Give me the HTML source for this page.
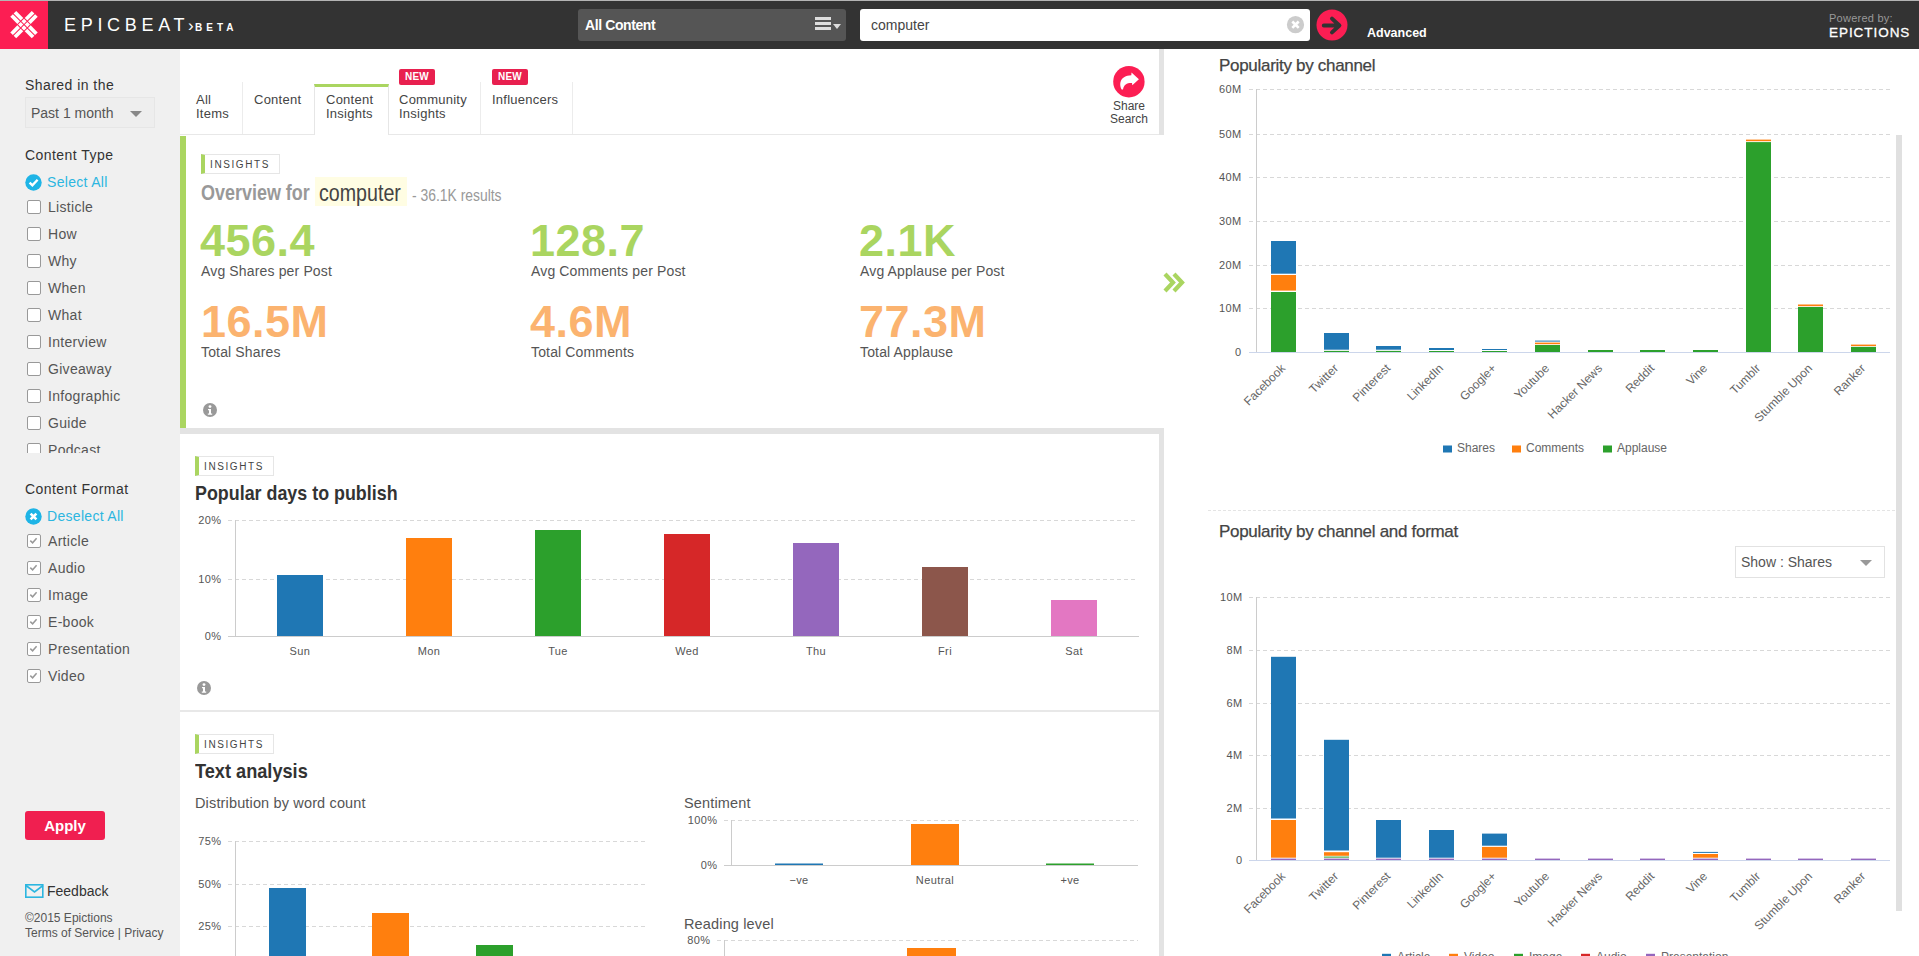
<!DOCTYPE html>
<html><head><meta charset="utf-8">
<style>
*{margin:0;padding:0;box-sizing:border-box}
html,body{width:1919px;height:956px;overflow:hidden;background:#fff;font-family:"Liberation Sans",sans-serif;color:#444}
.a{position:absolute;white-space:nowrap}
#hdr{position:absolute;left:0;top:0;width:1919px;height:49px;background:#333;border-top:1px solid #b4b4b4}
#side{position:absolute;left:0;top:49px;width:180px;height:907px;background:#f0f0f0}
.cb{position:absolute;left:27px;width:14px;height:14px;border:1.5px solid #999;border-radius:2px;background:#fff}
.lbl{position:absolute;left:48px;font-size:14px;color:#555;line-height:16px;letter-spacing:0.3px}
.badge{position:absolute;height:20px;border:1px solid #e6e6e6;border-left:4px solid #aad560;font-size:10px;letter-spacing:1.6px;color:#444;padding-left:5px;line-height:20px;width:79px}
.cond{display:inline-block;transform-origin:0 0;font-weight:bold}
.big{position:absolute;font-size:45px;font-weight:bold;line-height:45px;letter-spacing:0.5px}
.sub{position:absolute;font-size:14px;color:#555;line-height:16px;letter-spacing:0.15px}
.tab{font-size:13px;line-height:14px;color:#444;letter-spacing:0.25px}
.new{width:36px;height:16px;background:#e8204f;border-radius:2px;color:#fff;font-weight:bold;font-size:10px;line-height:16px;text-align:center;letter-spacing:0.3px}
</style></head><body>
<div id="hdr">
 <div class="a" style="left:0;top:0;width:48px;height:48px;background:#fc1e53"></div>
 <svg class="a" style="left:0;top:0" width="48" height="48" viewBox="0 0 48 48"><g fill="#fff" transform="translate(24 23.6) rotate(45)"><rect x="-4.20" y="-4.20" width="3.70" height="3.70"/><rect x="-4.20" y="0.50" width="3.70" height="3.70"/><rect x="0.50" y="-4.20" width="3.70" height="3.70"/><rect x="0.50" y="0.50" width="3.70" height="3.70"/><rect x="5.20" y="-4.20" width="10.00" height="3.70"/><rect x="5.20" y="0.50" width="10.00" height="3.70"/><rect x="-15.20" y="-4.20" width="10.00" height="3.70"/><rect x="-15.20" y="0.50" width="10.00" height="3.70"/><rect x="-4.20" y="5.20" width="3.70" height="10.00"/><rect x="0.50" y="5.20" width="3.70" height="10.00"/><rect x="-4.20" y="-15.20" width="3.70" height="10.00"/><rect x="0.50" y="-15.20" width="3.70" height="10.00"/></g></svg>
 <div class="a" style="left:64px;top:14px;font-size:18px;letter-spacing:4.7px;color:#fff;line-height:20px">EPICBEAT</div>
 <div class="a" style="left:188px;top:16px;font-size:17px;color:#fff;line-height:17px">›</div>
 <div class="a" style="left:195px;top:21px;font-size:10px;font-weight:bold;letter-spacing:4px;color:#fff;line-height:12px">BETA</div>
 <div class="a" style="left:578px;top:8px;width:268px;height:32px;background:#555;border-radius:3px"></div>
 <div class="a" style="left:585px;top:16px;font-size:14px;font-weight:bold;color:#fff;line-height:17px;letter-spacing:-0.4px">All Content</div>
 <div class="a" style="left:815px;top:16px;width:16px;height:3px;background:#ddd;box-shadow:0 5px 0 #ddd,0 10px 0 #ddd"></div>
 <div class="a" style="left:833px;top:23px;width:0;height:0;border-left:4px solid transparent;border-right:4px solid transparent;border-top:5px solid #ddd"></div>
 <div class="a" style="left:860px;top:8px;width:450px;height:32px;background:#fff;border-radius:3px"></div>
 <div class="a" style="left:871px;top:16px;font-size:14px;color:#444;line-height:17px">computer</div>
 <svg class="a" style="left:1286px;top:14px" width="20" height="20"><circle cx="9.5" cy="9.7" r="8.6" fill="#ccc"/><path d="M6.3 6.5 L12.7 12.9 M12.7 6.5 L6.3 12.9" stroke="#fff" stroke-width="2.6"/></svg>
 <svg class="a" style="left:1316px;top:8px" width="32" height="32"><circle cx="16" cy="16" r="15.5" fill="#fc1e53"/><path d="M7.8 16.5 H23 M16 9.6 L23.4 16.5 L16 23.4" stroke="#333" stroke-width="4" fill="none" stroke-linecap="round" stroke-linejoin="round"/></svg>
 <div class="a" style="left:1367px;top:25px;font-size:12.5px;font-weight:bold;color:#fff;line-height:15px">Advanced</div>
 <div class="a" style="left:1829px;top:11px;font-size:11px;color:#999;line-height:13px;letter-spacing:0.25px">Powered by:</div>
 <div class="a" style="left:1829px;top:24px;font-size:13.5px;letter-spacing:0.95px;color:#fff;line-height:15px;-webkit-text-stroke:0.3px #fff">EPICTIONS</div>
</div>
<div id="side">
 <div class="a" style="left:25px;top:28px;font-size:14px;color:#333;line-height:16px;letter-spacing:0.45px">Shared in the</div>
 <div class="a" style="left:25px;top:48px;width:130px;height:31px;border:1px solid #e6e6e6;background:#eee"></div>
 <div class="a" style="left:31px;top:56px;font-size:14px;color:#555;line-height:16px">Past 1 month</div>
 <div class="a" style="left:130px;top:62px;width:0;height:0;border-left:6px solid transparent;border-right:6px solid transparent;border-top:6px solid #888"></div>
 <div class="a" style="left:25px;top:98px;font-size:14px;color:#333;line-height:16px;letter-spacing:0.45px">Content Type</div>
 <svg class="a" style="left:25px;top:125px" width="17" height="17"><circle cx="8.5" cy="8.5" r="8.2" fill="#1eb4e6"/><path d="M4.6 8.6 L7.4 11.3 L12.6 5.8" stroke="#fff" stroke-width="2.4" fill="none"/></svg>
 <div class="a" style="left:47px;top:125px;font-size:14px;color:#2cb6e0;line-height:16px;letter-spacing:0.3px">Select All</div>
 <div class="a" style="left:0;top:140px;width:180px;height:264px;overflow:hidden">
  <div class="cb" style="top:11px"></div><div class="lbl" style="top:10px">Listicle</div>
  <div class="cb" style="top:38px"></div><div class="lbl" style="top:37px">How</div>
  <div class="cb" style="top:65px"></div><div class="lbl" style="top:64px">Why</div>
  <div class="cb" style="top:92px"></div><div class="lbl" style="top:91px">When</div>
  <div class="cb" style="top:119px"></div><div class="lbl" style="top:118px">What</div>
  <div class="cb" style="top:146px"></div><div class="lbl" style="top:145px">Interview</div>
  <div class="cb" style="top:173px"></div><div class="lbl" style="top:172px">Giveaway</div>
  <div class="cb" style="top:200px"></div><div class="lbl" style="top:199px">Infographic</div>
  <div class="cb" style="top:227px"></div><div class="lbl" style="top:226px">Guide</div>
  <div class="cb" style="top:254px"></div><div class="lbl" style="top:253px">Podcast</div>
 </div>
 <div class="a" style="left:25px;top:432px;font-size:14px;color:#333;line-height:16px;letter-spacing:0.45px">Content Format</div>
 <svg class="a" style="left:25px;top:459px" width="17" height="17"><circle cx="8.5" cy="8.5" r="8.2" fill="#1eb4e6"/><path d="M5.6 5.6 L11.4 11.4 M11.4 5.6 L5.6 11.4" stroke="#fff" stroke-width="2.6"/></svg>
 <div class="a" style="left:47px;top:459px;font-size:14px;color:#2cb6e0;line-height:16px;letter-spacing:0.3px">Deselect All</div>
 <div class="cb" style="top:485px"><svg style="position:absolute;left:0;top:0" width="11" height="11"><path d="M2.3 5.6 L4.6 7.8 L8.6 3.2" stroke="#999" stroke-width="1.5" fill="none"/></svg></div><div class="lbl" style="top:484px">Article</div>
 <div class="cb" style="top:512px"><svg style="position:absolute;left:0;top:0" width="11" height="11"><path d="M2.3 5.6 L4.6 7.8 L8.6 3.2" stroke="#999" stroke-width="1.5" fill="none"/></svg></div><div class="lbl" style="top:511px">Audio</div>
 <div class="cb" style="top:539px"><svg style="position:absolute;left:0;top:0" width="11" height="11"><path d="M2.3 5.6 L4.6 7.8 L8.6 3.2" stroke="#999" stroke-width="1.5" fill="none"/></svg></div><div class="lbl" style="top:538px">Image</div>
 <div class="cb" style="top:566px"><svg style="position:absolute;left:0;top:0" width="11" height="11"><path d="M2.3 5.6 L4.6 7.8 L8.6 3.2" stroke="#999" stroke-width="1.5" fill="none"/></svg></div><div class="lbl" style="top:565px">E-book</div>
 <div class="cb" style="top:593px"><svg style="position:absolute;left:0;top:0" width="11" height="11"><path d="M2.3 5.6 L4.6 7.8 L8.6 3.2" stroke="#999" stroke-width="1.5" fill="none"/></svg></div><div class="lbl" style="top:592px">Presentation</div>
 <div class="cb" style="top:620px"><svg style="position:absolute;left:0;top:0" width="11" height="11"><path d="M2.3 5.6 L4.6 7.8 L8.6 3.2" stroke="#999" stroke-width="1.5" fill="none"/></svg></div><div class="lbl" style="top:619px">Video</div>
 <div class="a" style="left:25px;top:762px;width:80px;height:29px;background:#f01f50;border-radius:3px;color:#fff;font-weight:bold;font-size:15px;line-height:29px;text-align:center">Apply</div>
 <svg class="a" style="left:25px;top:835px" width="19" height="15"><rect x="0.8" y="0.8" width="17" height="12.4" fill="none" stroke="#2cb6e0" stroke-width="1.6"/><path d="M1 1.5 L9.5 8 L18 1.5" stroke="#2cb6e0" stroke-width="1.6" fill="none"/></svg>
 <div class="a" style="left:47px;top:834px;font-size:14px;color:#333;line-height:16px">Feedback</div>
 <div class="a" style="left:25px;top:862px;font-size:12px;color:#555;line-height:14px">©2015 Epictions</div>
 <div class="a" style="left:25px;top:877px;font-size:12px;color:#555;line-height:14px">Terms of Service | Privacy</div>
</div>
<div id="main">
 <!-- tabs -->
 <div class="a" style="left:180px;top:134px;width:979px;height:1px;background:#e8e8e8"></div>
 <div class="a" style="left:1159px;top:49px;width:5px;height:86px;background:#e3e3e3"></div>
 <div class="a" style="left:242px;top:82px;width:1px;height:52px;background:#ececec"></div>
 <div class="a" style="left:314px;top:84px;width:75px;height:51px;border-left:1px solid #e6e6e6;border-right:1px solid #e6e6e6;border-top:3px solid #aad560;background:#fff"></div>
 <div class="a" style="left:480px;top:82px;width:1px;height:52px;background:#ececec"></div>
 <div class="a" style="left:572px;top:82px;width:1px;height:52px;background:#ececec"></div>
 <div class="a tab" style="left:196px;top:93px">All<br>Items</div>
 <div class="a tab" style="left:254px;top:93px">Content</div>
 <div class="a tab" style="left:326px;top:93px">Content<br>Insights</div>
 <div class="a tab" style="left:399px;top:93px">Community<br>Insights</div>
 <div class="a tab" style="left:492px;top:93px">Influencers</div>
 <div class="a new" style="left:399px;top:69px">NEW</div>
 <div class="a new" style="left:492px;top:69px">NEW</div>
 <svg class="a" style="left:1113px;top:66px" width="32" height="32"><circle cx="15.9" cy="15.7" r="15.7" fill="#fc1e53"/><path d="M8.7 23.6 C5.8 18.5 6.8 9.6 18.3 9.3 L18.5 6.6 L25.9 13.2 L19.3 19.3 L19 17 C14 16.8 11 18.2 10 23.6 Z" fill="#fff"/></svg>
 <div class="a" style="left:1108px;top:100px;font-size:12px;color:#444;line-height:13px;text-align:center;width:42px">Share<br>Search</div>

 <!-- overview -->
 <div class="a" style="left:180px;top:136px;width:6px;height:292px;background:#aad560"></div>
 <div class="a" style="left:180px;top:428px;width:984px;height:6px;background:#e3e3e3"></div>
 <div class="badge" style="left:201px;top:154px">INSIGHTS</div>
 <div class="a" style="left:201px;top:181px;font-size:21.5px;line-height:24px;color:#999"><span class="cond" style="transform:scaleX(0.835)">Overview for</span></div>
 <div class="a" style="left:315px;top:177px;width:92px;height:29px;background:#fffde3"></div>
 <div class="a" style="left:319px;top:179px;font-size:24px;line-height:28px;color:#444"><span class="cond" style="font-weight:normal;transform:scaleX(0.818)">computer</span></div>
 <div class="a" style="left:412px;top:187px;font-size:16px;line-height:18px;color:#999"><span class="cond" style="font-weight:normal;transform:scaleX(0.868)">- 36.1K results</span></div>
 <div class="big" style="left:200px;top:218px;color:#aad560">456.4</div>
 <div class="sub" style="left:201px;top:263px">Avg Shares per Post</div>
 <div class="big" style="left:530px;top:218px;color:#aad560">128.7</div>
 <div class="sub" style="left:531px;top:263px">Avg Comments per Post</div>
 <div class="big" style="left:859px;top:218px;color:#aad560">2.1K</div>
 <div class="sub" style="left:860px;top:263px">Avg Applause per Post</div>
 <div class="big" style="left:201px;top:299px;color:#fbb36f">16.5M</div>
 <div class="sub" style="left:201px;top:344px">Total Shares</div>
 <div class="big" style="left:530px;top:299px;color:#fbb36f">4.6M</div>
 <div class="sub" style="left:531px;top:344px">Total Comments</div>
 <div class="big" style="left:859px;top:299px;color:#fbb36f">77.3M</div>
 <div class="sub" style="left:860px;top:344px">Total Applause</div>
 <svg class="a" style="left:203px;top:403px" width="14" height="14"><circle cx="7" cy="7" r="7" fill="#999"/><circle cx="7" cy="3.6" r="1.4" fill="#fff"/><path d="M5 6 H8 V10.6 H9.2 V11.8 H4.8 V10.6 H6 V7.2 H5 Z" fill="#fff"/></svg>
 <svg class="a" style="left:1163px;top:271px" width="25" height="23"><path d="M2 3 L10 11.5 L2 20 M11 3 L19 11.5 L11 20" stroke="#aad560" stroke-width="4.2" fill="none"/></svg>

 <!-- popular days -->
 <div class="a" style="left:1159px;top:434px;width:5px;height:522px;background:#e3e3e3"></div>
 <div class="a" style="left:180px;top:710px;width:979px;height:2px;background:#e8e8e8"></div>
 <div class="badge" style="left:195px;top:456px">INSIGHTS</div>
 <div class="a" style="left:195px;top:481px;font-size:21px;line-height:24px;color:#333"><span class="cond" style="transform:scaleX(0.851)">Popular days to publish</span></div>
 <svg class="a" style="left:197px;top:681px" width="14" height="14"><circle cx="7" cy="7" r="7" fill="#999"/><circle cx="7" cy="3.6" r="1.4" fill="#fff"/><path d="M5 6 H8 V10.6 H9.2 V11.8 H4.8 V10.6 H6 V7.2 H5 Z" fill="#fff"/></svg>

 <!-- text analysis -->
 <div class="badge" style="left:195px;top:734px">INSIGHTS</div>
 <div class="a" style="left:195px;top:759px;font-size:21px;line-height:24px;color:#333"><span class="cond" style="transform:scaleX(0.865)">Text analysis</span></div>
 <div class="sub" style="left:195px;top:795px;font-size:14.5px">Distribution by word count</div>
 <div class="sub" style="left:684px;top:795px;font-size:14.5px">Sentiment</div>
 <div class="sub" style="left:684px;top:916px;font-size:14.5px">Reading level</div>
</div>
<div id="right">
 <div class="a" style="left:1219px;top:56px;font-size:17px;color:#444;line-height:20px;-webkit-text-stroke:0.25px #444;letter-spacing:-0.3px">Popularity by channel</div>
 <div class="a" style="left:1208px;top:510px;width:687px;height:0;border-top:1px dashed #e4e4e4"></div>
 <div class="a" style="left:1219px;top:522px;font-size:17px;color:#444;line-height:20px;-webkit-text-stroke:0.25px #444;letter-spacing:-0.3px">Popularity by channel and format</div>
 <div class="a" style="left:1735px;top:546px;width:150px;height:32px;border:1px solid #e2e2e2;background:#fff"></div>
 <div class="a" style="left:1741px;top:554px;font-size:14px;color:#555;line-height:16px">Show : Shares</div>
 <div class="a" style="left:1860px;top:560px;width:0;height:0;border-left:6px solid transparent;border-right:6px solid transparent;border-top:6px solid #999"></div>
 <div class="a" style="left:1896px;top:135px;width:6px;height:776px;background:#e0e0e0"></div>
</div>
<svg id="charts" class="a" style="left:0;top:0" width="1919" height="956" font-family="Liberation Sans, sans-serif"><line x1="228" y1="520.5" x2="1138" y2="520.5" stroke="#d8d8d8" stroke-width="1" stroke-dasharray="4,3"/><text x="221.5" y="524.0" text-anchor="end" font-size="11" fill="#555" letter-spacing="0.4">20%</text><line x1="228" y1="579.5" x2="1138" y2="579.5" stroke="#d8d8d8" stroke-width="1" stroke-dasharray="4,3"/><text x="221.5" y="583.0" text-anchor="end" font-size="11" fill="#555" letter-spacing="0.4">10%</text><text x="221.5" y="639.5" text-anchor="end" font-size="11" fill="#555" letter-spacing="0.4">0%</text><line x1="235.5" y1="520" x2="235.5" y2="636" stroke="#ccc" stroke-width="1"/><rect x="277" y="575.0" width="46" height="61.0" fill="#1f77b4"/><text x="300" y="655" text-anchor="middle" font-size="11" fill="#555" letter-spacing="0.4">Sun</text><rect x="406" y="538.0" width="46" height="98.0" fill="#ff7f0e"/><text x="429" y="655" text-anchor="middle" font-size="11" fill="#555" letter-spacing="0.4">Mon</text><rect x="535" y="530.0" width="46" height="106.0" fill="#2ca02c"/><text x="558" y="655" text-anchor="middle" font-size="11" fill="#555" letter-spacing="0.4">Tue</text><rect x="664" y="534.0" width="46" height="102.0" fill="#d62728"/><text x="687" y="655" text-anchor="middle" font-size="11" fill="#555" letter-spacing="0.4">Wed</text><rect x="793" y="543.0" width="46" height="93.0" fill="#9467bd"/><text x="816" y="655" text-anchor="middle" font-size="11" fill="#555" letter-spacing="0.4">Thu</text><rect x="922" y="567.0" width="46" height="69.0" fill="#8c564b"/><text x="945" y="655" text-anchor="middle" font-size="11" fill="#555" letter-spacing="0.4">Fri</text><rect x="1051" y="600.0" width="46" height="36.0" fill="#e377c2"/><text x="1074" y="655" text-anchor="middle" font-size="11" fill="#555" letter-spacing="0.4">Sat</text><line x1="228" y1="636.5" x2="1139" y2="636.5" stroke="#cccccc" stroke-width="1"/><line x1="228" y1="841.5" x2="646" y2="841.5" stroke="#d8d8d8" stroke-width="1" stroke-dasharray="4,3"/><text x="221.5" y="845.0" text-anchor="end" font-size="11" fill="#555" letter-spacing="0.4">75%</text><line x1="228" y1="884.5" x2="646" y2="884.5" stroke="#d8d8d8" stroke-width="1" stroke-dasharray="4,3"/><text x="221.5" y="888.0" text-anchor="end" font-size="11" fill="#555" letter-spacing="0.4">50%</text><line x1="228" y1="926.5" x2="646" y2="926.5" stroke="#d8d8d8" stroke-width="1" stroke-dasharray="4,3"/><text x="221.5" y="930.0" text-anchor="end" font-size="11" fill="#555" letter-spacing="0.4">25%</text><line x1="235.5" y1="841" x2="235.5" y2="956" stroke="#ccc" stroke-width="1"/><rect x="269" y="888.0" width="37" height="68.0" fill="#1f77b4"/><rect x="372" y="913.0" width="37" height="43.0" fill="#ff7f0e"/><rect x="476" y="945.0" width="37" height="11.0" fill="#2ca02c"/><line x1="724" y1="820.5" x2="1138" y2="820.5" stroke="#d8d8d8" stroke-width="1" stroke-dasharray="4,3"/><text x="717.5" y="823.5" text-anchor="end" font-size="11" fill="#555" letter-spacing="0.4">100%</text><text x="717.5" y="868.5" text-anchor="end" font-size="11" fill="#555" letter-spacing="0.4">0%</text><line x1="731.5" y1="820" x2="731.5" y2="865" stroke="#ccc" stroke-width="1"/><rect x="911" y="824.0" width="48" height="41.0" fill="#ff7f0e"/><rect x="775" y="863.5" width="48" height="1.5" fill="#1f77b4"/><rect x="1046" y="863.5" width="48" height="1.5" fill="#2ca02c"/><line x1="724" y1="865.5" x2="1138" y2="865.5" stroke="#cccccc" stroke-width="1"/><text x="799" y="884" text-anchor="middle" font-size="11" fill="#555" letter-spacing="0.4">−ve</text><text x="935" y="884" text-anchor="middle" font-size="11" fill="#555" letter-spacing="0.4">Neutral</text><text x="1070" y="884" text-anchor="middle" font-size="11" fill="#555" letter-spacing="0.4">+ve</text><line x1="717" y1="940.5" x2="1138" y2="940.5" stroke="#d8d8d8" stroke-width="1" stroke-dasharray="4,3"/><text x="710.5" y="943.5" text-anchor="end" font-size="11" fill="#555" letter-spacing="0.4">80%</text><line x1="724.5" y1="940" x2="724.5" y2="956" stroke="#ccc" stroke-width="1"/><rect x="907" y="948.0" width="49" height="8.0" fill="#ff7f0e"/><text x="1241.5" y="356.0" text-anchor="end" font-size="11" fill="#555" letter-spacing="0.4">0</text><line x1="1249" y1="308.5" x2="1890" y2="308.5" stroke="#d8d8d8" stroke-width="1" stroke-dasharray="4,3"/><text x="1241.5" y="312.0" text-anchor="end" font-size="11" fill="#555" letter-spacing="0.4">10M</text><line x1="1249" y1="265.5" x2="1890" y2="265.5" stroke="#d8d8d8" stroke-width="1" stroke-dasharray="4,3"/><text x="1241.5" y="269.0" text-anchor="end" font-size="11" fill="#555" letter-spacing="0.4">20M</text><line x1="1249" y1="221.5" x2="1890" y2="221.5" stroke="#d8d8d8" stroke-width="1" stroke-dasharray="4,3"/><text x="1241.5" y="225.0" text-anchor="end" font-size="11" fill="#555" letter-spacing="0.4">30M</text><line x1="1249" y1="177.5" x2="1890" y2="177.5" stroke="#d8d8d8" stroke-width="1" stroke-dasharray="4,3"/><text x="1241.5" y="181.0" text-anchor="end" font-size="11" fill="#555" letter-spacing="0.4">40M</text><line x1="1249" y1="134.5" x2="1890" y2="134.5" stroke="#d8d8d8" stroke-width="1" stroke-dasharray="4,3"/><text x="1241.5" y="138.0" text-anchor="end" font-size="11" fill="#555" letter-spacing="0.4">50M</text><line x1="1249" y1="89.5" x2="1890" y2="89.5" stroke="#d8d8d8" stroke-width="1" stroke-dasharray="4,3"/><text x="1241.5" y="93.0" text-anchor="end" font-size="11" fill="#555" letter-spacing="0.4">60M</text><line x1="1256.5" y1="89" x2="1256.5" y2="352" stroke="#ccc" stroke-width="1"/><rect x="1271" y="241.0" width="25" height="32.7" fill="#1f77b4"/><rect x="1271" y="275.0" width="25" height="15.6" fill="#ff7f0e"/><rect x="1271" y="292.0" width="25" height="60.0" fill="#2ca02c"/><rect x="1324" y="333.0" width="25" height="16.7" fill="#1f77b4"/><rect x="1324" y="350.9" width="25" height="1.1" fill="#2ca02c"/><rect x="1376" y="346.0" width="25" height="3.7" fill="#1f77b4"/><rect x="1376" y="350.9" width="25" height="1.1" fill="#2ca02c"/><rect x="1429" y="348.0" width="25" height="2.0" fill="#1f77b4"/><rect x="1429" y="351.0" width="25" height="1.0" fill="#2ca02c"/><rect x="1482" y="349.0" width="25" height="1.0" fill="#1f77b4"/><rect x="1482" y="351.0" width="25" height="1.0" fill="#2ca02c"/><rect x="1535" y="340.6" width="25" height="1.0" fill="#1f77b4"/><rect x="1535" y="342.6" width="25" height="1.6" fill="#ff7f0e"/><rect x="1535" y="345.0" width="25" height="7.0" fill="#2ca02c"/><rect x="1588" y="350.0" width="25" height="2.0" fill="#2ca02c"/><rect x="1640" y="350.0" width="25" height="2.0" fill="#2ca02c"/><rect x="1693" y="350.0" width="25" height="2.0" fill="#2ca02c"/><rect x="1746" y="139.6" width="25" height="1.6" fill="#ff7f0e"/><rect x="1746" y="142.1" width="25" height="209.9" fill="#2ca02c"/><rect x="1798" y="304.5" width="25" height="1.7" fill="#ff7f0e"/><rect x="1798" y="307.0" width="25" height="45.0" fill="#2ca02c"/><rect x="1851" y="344.6" width="25" height="1.5" fill="#ff7f0e"/><rect x="1851" y="346.9" width="25" height="5.1" fill="#2ca02c"/><line x1="1249" y1="352.5" x2="1890" y2="352.5" stroke="#ccd6eb" stroke-width="1"/><text x="1286" y="369" text-anchor="end" font-size="12" fill="#666" transform="rotate(-45 1286 369)">Facebook</text><text x="1339" y="369" text-anchor="end" font-size="12" fill="#666" transform="rotate(-45 1339 369)">Twitter</text><text x="1391" y="369" text-anchor="end" font-size="12" fill="#666" transform="rotate(-45 1391 369)">Pinterest</text><text x="1444" y="369" text-anchor="end" font-size="12" fill="#666" transform="rotate(-45 1444 369)">LinkedIn</text><text x="1497" y="369" text-anchor="end" font-size="12" fill="#666" transform="rotate(-45 1497 369)">Google+</text><text x="1550" y="369" text-anchor="end" font-size="12" fill="#666" transform="rotate(-45 1550 369)">Youtube</text><text x="1603" y="369" text-anchor="end" font-size="12" fill="#666" transform="rotate(-45 1603 369)">Hacker News</text><text x="1655" y="369" text-anchor="end" font-size="12" fill="#666" transform="rotate(-45 1655 369)">Reddit</text><text x="1708" y="369" text-anchor="end" font-size="12" fill="#666" transform="rotate(-45 1708 369)">Vine</text><text x="1761" y="369" text-anchor="end" font-size="12" fill="#666" transform="rotate(-45 1761 369)">Tumblr</text><text x="1813" y="369" text-anchor="end" font-size="12" fill="#666" transform="rotate(-45 1813 369)">Stumble Upon</text><text x="1866" y="369" text-anchor="end" font-size="12" fill="#666" transform="rotate(-45 1866 369)">Ranker</text><rect x="1443" y="445.5" width="9" height="7.0" fill="#1f77b4"/><text x="1457" y="452" text-anchor="start" font-size="12" fill="#666" >Shares</text><rect x="1512" y="445.5" width="9" height="7.0" fill="#ff7f0e"/><text x="1526" y="452" text-anchor="start" font-size="12" fill="#666" >Comments</text><rect x="1603" y="445.5" width="9" height="7.0" fill="#2ca02c"/><text x="1617" y="452" text-anchor="start" font-size="12" fill="#666" >Applause</text><text x="1242.5" y="864.0" text-anchor="end" font-size="11" fill="#555" letter-spacing="0.4">0</text><line x1="1249" y1="808.5" x2="1890" y2="808.5" stroke="#d8d8d8" stroke-width="1" stroke-dasharray="4,3"/><text x="1242.5" y="812.0" text-anchor="end" font-size="11" fill="#555" letter-spacing="0.4">2M</text><line x1="1249" y1="755.5" x2="1890" y2="755.5" stroke="#d8d8d8" stroke-width="1" stroke-dasharray="4,3"/><text x="1242.5" y="759.0" text-anchor="end" font-size="11" fill="#555" letter-spacing="0.4">4M</text><line x1="1249" y1="703.5" x2="1890" y2="703.5" stroke="#d8d8d8" stroke-width="1" stroke-dasharray="4,3"/><text x="1242.5" y="707.0" text-anchor="end" font-size="11" fill="#555" letter-spacing="0.4">6M</text><line x1="1249" y1="650.5" x2="1890" y2="650.5" stroke="#d8d8d8" stroke-width="1" stroke-dasharray="4,3"/><text x="1242.5" y="654.0" text-anchor="end" font-size="11" fill="#555" letter-spacing="0.4">8M</text><line x1="1249" y1="597.5" x2="1890" y2="597.5" stroke="#d8d8d8" stroke-width="1" stroke-dasharray="4,3"/><text x="1242.5" y="601.0" text-anchor="end" font-size="11" fill="#555" letter-spacing="0.4">10M</text><line x1="1256.5" y1="597" x2="1256.5" y2="860" stroke="#ccc" stroke-width="1"/><rect x="1271" y="656.8" width="25" height="161.7" fill="#1f77b4"/><rect x="1271" y="820.0" width="25" height="37.7" fill="#ff7f0e"/><rect x="1271" y="858.6" width="25" height="1.4" fill="#9467bd"/><rect x="1324" y="739.8" width="25" height="110.7" fill="#1f77b4"/><rect x="1324" y="852.2" width="25" height="3.6" fill="#ff7f0e"/><rect x="1324" y="856.6" width="25" height="1.0" fill="#2ca02c"/><rect x="1324" y="858.6" width="25" height="1.4" fill="#9467bd"/><rect x="1376" y="820.0" width="25" height="37.7" fill="#1f77b4"/><rect x="1376" y="858.6" width="25" height="1.4" fill="#9467bd"/><rect x="1429" y="830.0" width="25" height="27.7" fill="#1f77b4"/><rect x="1429" y="858.6" width="25" height="1.4" fill="#9467bd"/><rect x="1482" y="833.6" width="25" height="12.1" fill="#1f77b4"/><rect x="1482" y="846.9" width="25" height="10.8" fill="#ff7f0e"/><rect x="1482" y="858.6" width="25" height="1.4" fill="#9467bd"/><rect x="1535" y="858.6" width="25" height="1.4" fill="#9467bd"/><rect x="1588" y="858.6" width="25" height="1.4" fill="#9467bd"/><rect x="1640" y="858.6" width="25" height="1.4" fill="#9467bd"/><rect x="1693" y="851.9" width="25" height="1.0" fill="#1f77b4"/><rect x="1693" y="854.0" width="25" height="3.7" fill="#ff7f0e"/><rect x="1693" y="858.6" width="25" height="1.4" fill="#9467bd"/><rect x="1746" y="858.6" width="25" height="1.4" fill="#9467bd"/><rect x="1798" y="858.6" width="25" height="1.4" fill="#9467bd"/><rect x="1851" y="858.6" width="25" height="1.4" fill="#9467bd"/><line x1="1249" y1="860.5" x2="1890" y2="860.5" stroke="#ccd6eb" stroke-width="1"/><text x="1286" y="877" text-anchor="end" font-size="12" fill="#666" transform="rotate(-45 1286 877)">Facebook</text><text x="1339" y="877" text-anchor="end" font-size="12" fill="#666" transform="rotate(-45 1339 877)">Twitter</text><text x="1391" y="877" text-anchor="end" font-size="12" fill="#666" transform="rotate(-45 1391 877)">Pinterest</text><text x="1444" y="877" text-anchor="end" font-size="12" fill="#666" transform="rotate(-45 1444 877)">LinkedIn</text><text x="1497" y="877" text-anchor="end" font-size="12" fill="#666" transform="rotate(-45 1497 877)">Google+</text><text x="1550" y="877" text-anchor="end" font-size="12" fill="#666" transform="rotate(-45 1550 877)">Youtube</text><text x="1603" y="877" text-anchor="end" font-size="12" fill="#666" transform="rotate(-45 1603 877)">Hacker News</text><text x="1655" y="877" text-anchor="end" font-size="12" fill="#666" transform="rotate(-45 1655 877)">Reddit</text><text x="1708" y="877" text-anchor="end" font-size="12" fill="#666" transform="rotate(-45 1708 877)">Vine</text><text x="1761" y="877" text-anchor="end" font-size="12" fill="#666" transform="rotate(-45 1761 877)">Tumblr</text><text x="1813" y="877" text-anchor="end" font-size="12" fill="#666" transform="rotate(-45 1813 877)">Stumble Upon</text><text x="1866" y="877" text-anchor="end" font-size="12" fill="#666" transform="rotate(-45 1866 877)">Ranker</text><rect x="1382" y="953.8" width="9" height="7.2" fill="#1f77b4"/><text x="1397" y="961" text-anchor="start" font-size="12" fill="#666" >Article</text><rect x="1449" y="953.8" width="9" height="7.2" fill="#ff7f0e"/><text x="1464" y="961" text-anchor="start" font-size="12" fill="#666" >Video</text><rect x="1514" y="953.8" width="9" height="7.2" fill="#2ca02c"/><text x="1529" y="961" text-anchor="start" font-size="12" fill="#666" >Image</text><rect x="1581" y="953.8" width="9" height="7.2" fill="#d62728"/><text x="1596" y="961" text-anchor="start" font-size="12" fill="#666" >Audio</text><rect x="1646" y="953.8" width="9" height="7.2" fill="#9467bd"/><text x="1661" y="961" text-anchor="start" font-size="12" fill="#666" >Presentation</text></svg>
</body></html>
